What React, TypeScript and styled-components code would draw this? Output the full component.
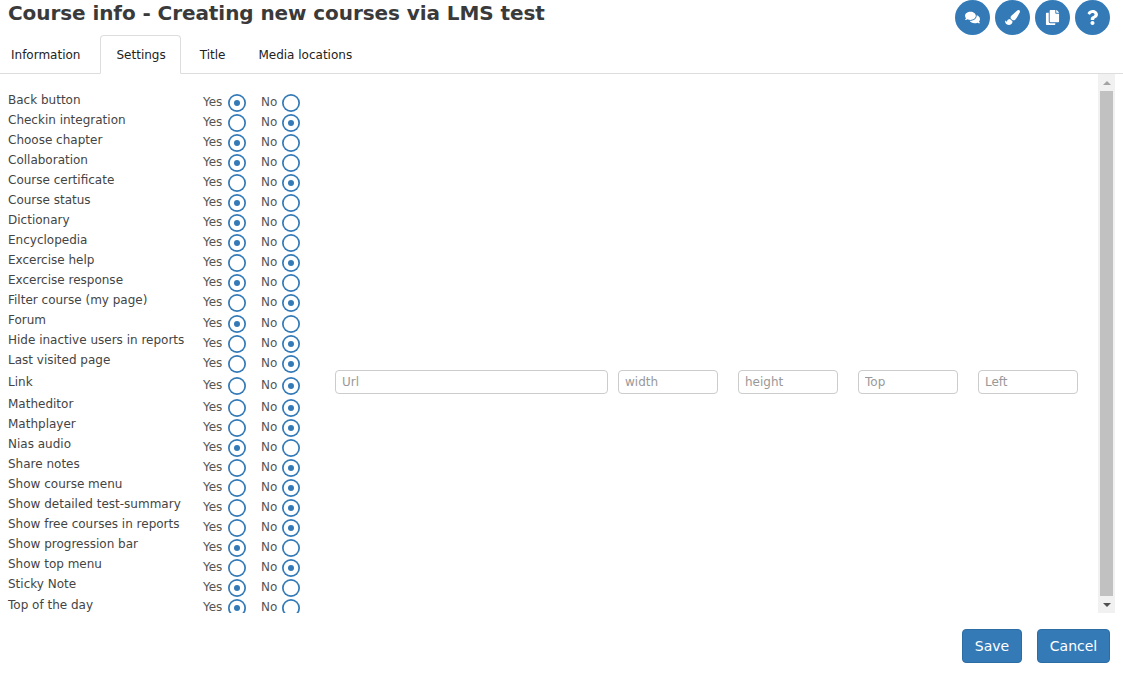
import React from 'react';
import styled, { createGlobalStyle } from 'styled-components';
import { FaComments, FaPaintBrush, FaCopy, FaQuestion } from 'react-icons/fa';

const GlobalStyle = createGlobalStyle`
  html, body { margin: 0; padding: 0; background: #fff; }
  body { font-family: "DejaVu Sans", Verdana, sans-serif; color: #333; overflow: hidden; }
`;

const Page = styled.div`
  width: 1123px;
  height: 677px;
  display: flex;
  flex-direction: column;
`;

const Header = styled.div`
  height: 35px;
  padding: 0 13px 0 8px;
  display: flex;
  justify-content: space-between;
`;

const Title = styled.h1`
  margin: 0;
  font-size: 20px;
  line-height: 26px;
  font-weight: 700;
  letter-spacing: -0.08px;
  color: #3a3a3a;
`;

const IconButtons = styled.div`
  display: flex;
  gap: 5px;
`;

const CircleButton = styled.button`
  width: 35px;
  height: 35px;
  padding: 0;
  border: none;
  border-radius: 50%;
  background: #337ab7;
  color: #fff;
  display: flex;
  align-items: center;
  justify-content: center;
`;

const Tabs = styled.div`
  height: 39px;
  box-sizing: border-box;
  border-bottom: 1px solid #ddd;
  display: flex;
`;

const Tab = styled.div<{ $active?: boolean; $gap: number }>`
  height: 39px;
  box-sizing: border-box;
  padding: ${(p) => (p.$active ? '0 14px 0 15px' : '0 10px')};
  margin-right: ${(p) => p.$gap}px;
  font-size: 12px;
  line-height: 38px;
  color: #222;
  background: ${(p) => (p.$active ? '#fff' : 'transparent')};
  border: 1px solid ${(p) => (p.$active ? '#ddd' : 'transparent')};
  border-bottom: ${(p) => (p.$active ? '1px solid #fff' : 'none')};
  border-radius: 4px 4px 0 0;
`;

const Body = styled.div`
  height: 539px;
  padding-right: 8px;
  display: flex;
`;

const Scroller = styled.div`
  flex: 1;
  overflow: hidden;
  padding: 16px 0 0 8px;
`;

const Row = styled.div<{ $tall?: boolean }>`
  height: ${(p) => (p.$tall ? 21.94 : 20.05)}px;
  padding-top: ${(p) => (p.$tall ? 2 : 0)}px;
  box-sizing: border-box;
  display: flex;
`;

const Label = styled.div`
  width: 195px;
  margin-top: -0.43px;
  font-size: 12px;
  line-height: 20px;
  color: #444;
  white-space: nowrap;
`;

const Choice = styled.div`
  display: flex;
  margin-right: 15px;
  font-size: 12px;
  line-height: 20px;
  color: #555;
  padding-top: 2px;
`;

const ChoiceText = styled.span<{ $width: number }>`
  width: ${(p) => p.$width}px;
`;

const Radio = styled.span<{ $checked?: boolean }>`
  width: 18px;
  height: 18px;
  margin-top: 2px;
  border-radius: 50%;
  box-shadow: inset 0 0 0 1.7px #337ab7;
  display: flex;
  align-items: center;
  justify-content: center;
  &::after {
    content: '';
    width: 6px;
    height: 6px;
    border-radius: 50%;
    background: ${(p) => (p.$checked ? '#337ab7' : 'transparent')};
  }
`;

const LinkFields = styled.div`
  margin: -3px 0 0 20px;
  display: flex;
  gap: 10px;
`;

const Field = styled.input<{ $wide?: boolean }>`
  width: ${(p) => (p.$wide ? 273 : 100)}px;
  height: 24px;
  box-sizing: border-box;
  padding: 0 6px;
  margin-right: ${(p) => (p.$wide ? 0 : 10)}px;
  border: 1px solid #ccc;
  border-radius: 4px;
  font-family: inherit;
  font-size: 12px;
  &::placeholder { color: #999; }
`;

const ScrollBar = styled.div`
  width: 17px;
  background: #f1f1f1;
  display: flex;
  flex-direction: column;
  align-items: center;
`;

const Arrow = styled.div<{ $down?: boolean }>`
  height: 17px;
  flex-shrink: 0;
  display: flex;
  align-items: center;
  justify-content: center;
  &::after {
    content: '';
    border-left: 4px solid transparent;
    border-right: 4px solid transparent;
    ${(p) => (p.$down ? 'border-top: 4px solid #505050;' : 'border-bottom: 4px solid #a3a3a3;')}
  }
`;

const Thumb = styled.div`
  width: 13px;
  flex: 1;
  background: #c1c1c1;
`;

const Footer = styled.div`
  padding: 16px 13px 0 0;
  display: flex;
  justify-content: flex-end;
  gap: 15px;
`;

const ActionButton = styled.button<{ $width: number }>`
  width: ${(p) => p.$width}px;
  height: 34px;
  padding: 0;
  border: 1px solid #2e6da4;
  border-radius: 4px;
  background: #337ab7;
  color: #fff;
  font-family: inherit;
  font-size: 14px;
`;

// yes: true means Yes is selected
const SETTINGS: { label: string; yes: boolean }[] = [
  { label: 'Back button', yes: true },
  { label: 'Checkin integration', yes: false },
  { label: 'Choose chapter', yes: true },
  { label: 'Collaboration', yes: true },
  { label: 'Course certificate', yes: false },
  { label: 'Course status', yes: true },
  { label: 'Dictionary', yes: true },
  { label: 'Encyclopedia', yes: true },
  { label: 'Excercise help', yes: false },
  { label: 'Excercise response', yes: true },
  { label: 'Filter course (my page)', yes: false },
  { label: 'Forum', yes: true },
  { label: 'Hide inactive users in reports', yes: false },
  { label: 'Last visited page', yes: false },
  { label: 'Link', yes: false },
  { label: 'Matheditor', yes: false },
  { label: 'Mathplayer', yes: false },
  { label: 'Nias audio', yes: true },
  { label: 'Share notes', yes: false },
  { label: 'Show course menu', yes: false },
  { label: 'Show detailed test-summary', yes: false },
  { label: 'Show free courses in reports', yes: false },
  { label: 'Show progression bar', yes: true },
  { label: 'Show top menu', yes: false },
  { label: 'Sticky Note', yes: true },
  { label: 'Top of the day', yes: true },
];

const TALL = ['Link', 'Matheditor'];

export default function App() {
  return (
    <Page>
      <GlobalStyle />
      <Header>
        <Title>Course info - Creating new courses via LMS test</Title>
        <IconButtons>
          <CircleButton><FaComments size={15} /></CircleButton>
          <CircleButton><FaPaintBrush size={15} /></CircleButton>
          <CircleButton><FaCopy size={15} /></CircleButton>
          <CircleButton><FaQuestion size={15} /></CircleButton>
        </IconButtons>
      </Header>
      <Tabs>
        <Tab $gap={9}>Information</Tab>
        <Tab $active $gap={8}>Settings</Tab>
        <Tab $gap={11}>Title</Tab>
        <Tab $gap={0}>Media locations</Tab>
      </Tabs>
      <Body>
        <Scroller>
          {SETTINGS.map((s) => (
            <Row key={s.label} $tall={TALL.includes(s.label)}>
              <Label>{s.label}</Label>
              <Choice><ChoiceText $width={25}>Yes</ChoiceText><Radio $checked={s.yes} /></Choice>
              <Choice><ChoiceText $width={21}>No</ChoiceText><Radio $checked={!s.yes} /></Choice>
              {s.label === 'Link' && (
                <LinkFields>
                  <Field $wide placeholder="Url" />
                  <Field placeholder="width" />
                  <Field placeholder="height" />
                  <Field placeholder="Top" />
                  <Field placeholder="Left" />
                </LinkFields>
              )}
            </Row>
          ))}
        </Scroller>
        <ScrollBar>
          <Arrow />
          <Thumb />
          <Arrow $down />
        </ScrollBar>
      </Body>
      <Footer>
        <ActionButton $width={60}>Save</ActionButton>
        <ActionButton $width={73}>Cancel</ActionButton>
      </Footer>
    </Page>
  );
}
